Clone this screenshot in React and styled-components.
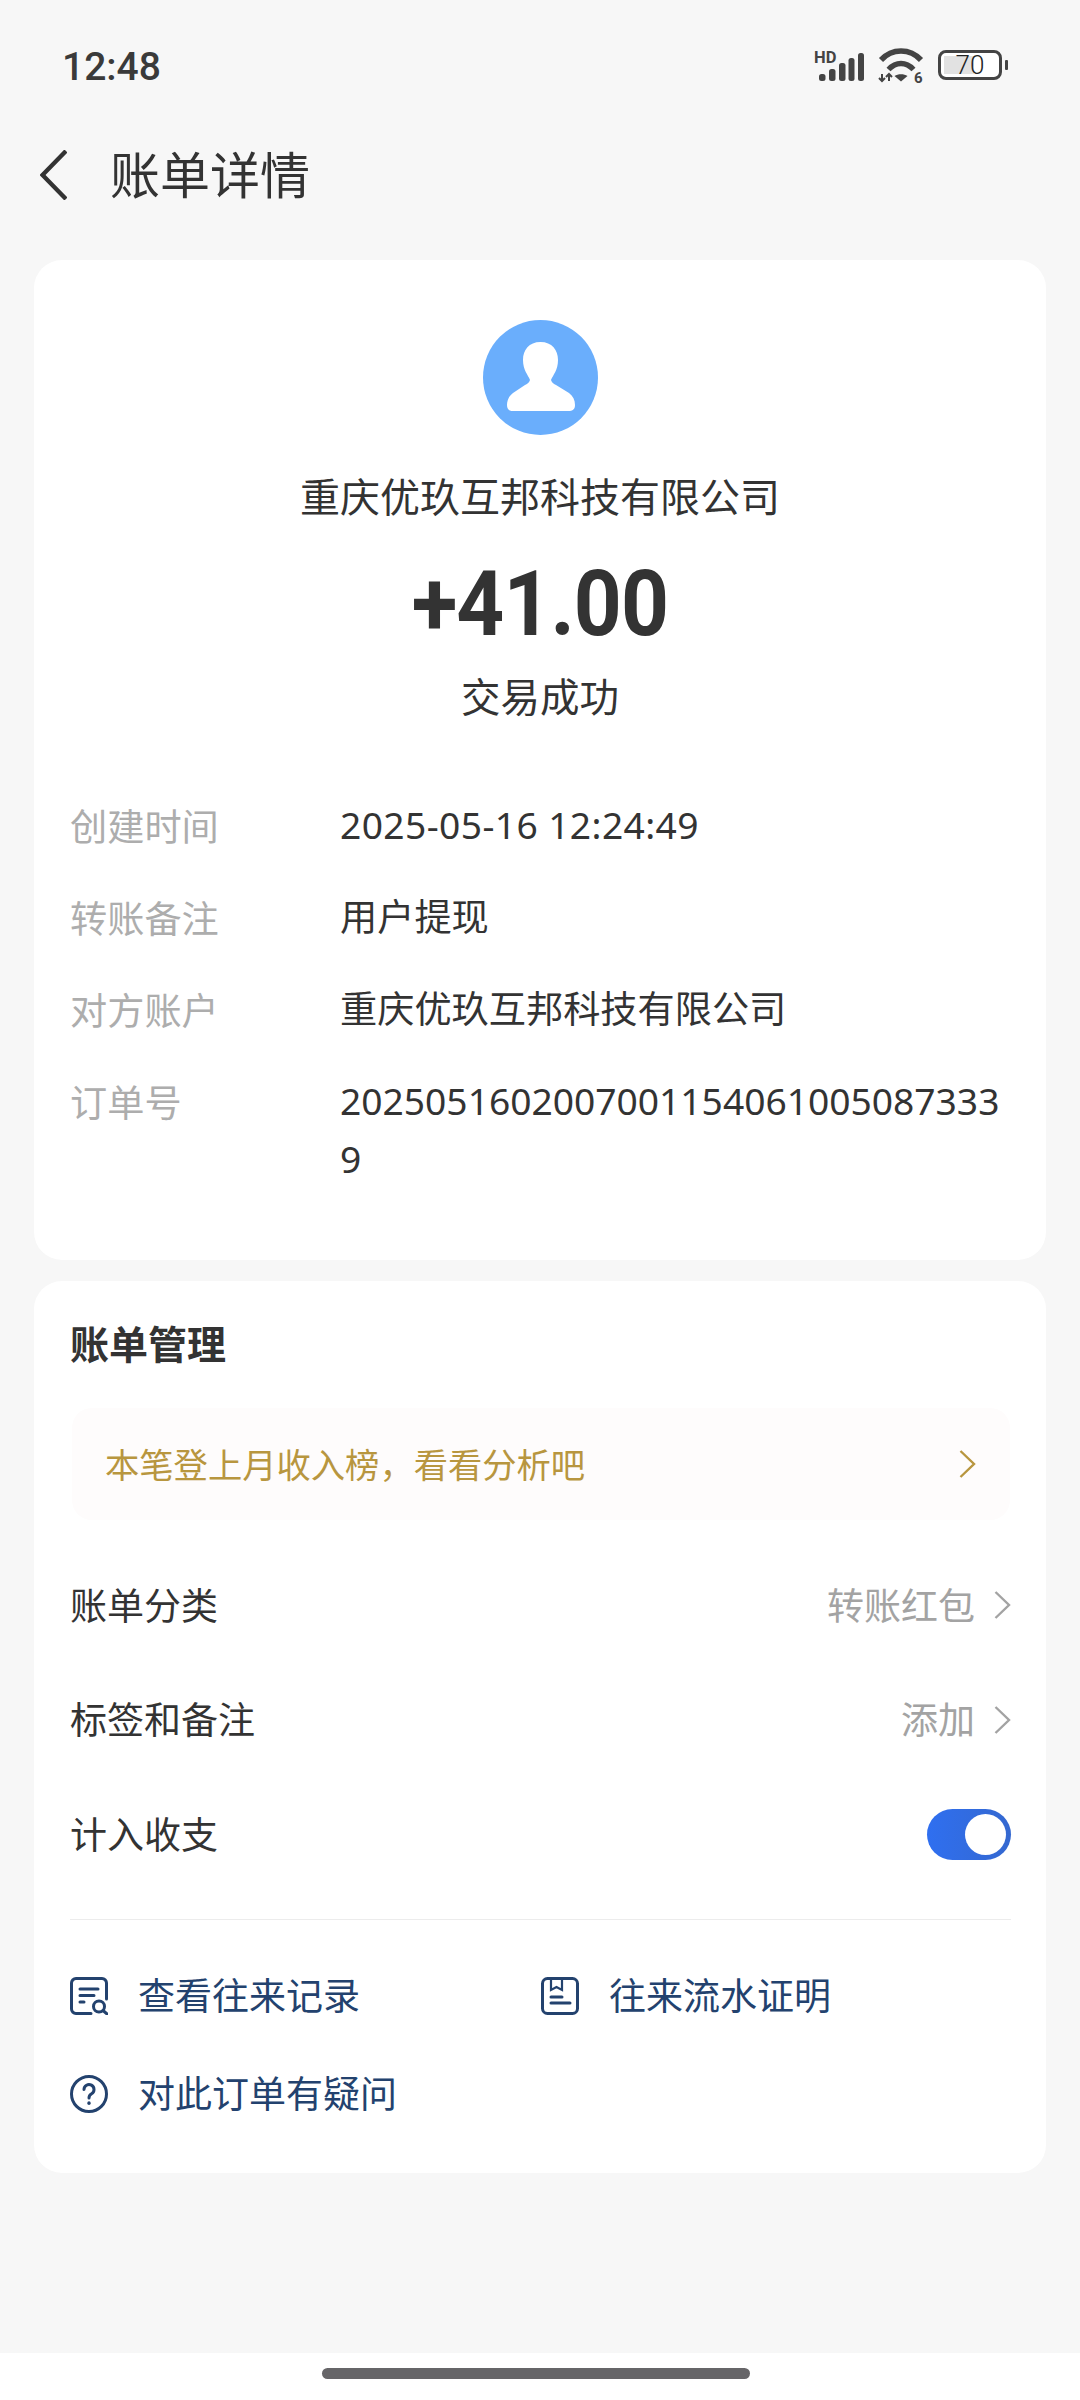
import styled, { createGlobalStyle } from "styled-components";

const GlobalStyle = createGlobalStyle`
  * {
    box-sizing: border-box;
  }
  html,
  body {
    margin: 0;
    padding: 0;
    background: #f7f7f7;
    font-family: "Noto Sans CJK SC", "Noto Sans", sans-serif;
    color: #333;
  }
`;

const details = [
  { label: "创建时间", value: "2025-05-16 12:24:49", wide: true },
  { label: "转账备注", value: "用户提现" },
  { label: "对方账户", value: "重庆优玖互邦科技有限公司" },
  { label: "订单号", value: "20250516020070011540610050873339" },
];

const BackIcon = () => (
  <svg width="27" height="50" viewBox="0 0 27 50" fill="none" stroke="#333" strokeWidth="4.4">
    <path d="M26 1 L2.5 25 L26 49" />
  </svg>
);

const Chevron = ({ color = "#a3a3a3" }) => (
  <svg width="17" height="28" viewBox="0 0 17 28" fill="none" stroke={color} strokeWidth="2.4">
    <path d="M1.5 1 L15 14 L1.5 27" />
  </svg>
);

const SignalIcon = () => (
  <svg width="50" height="45" viewBox="0 -6 50 45" fill="#444">
    <text x="0" y="14" fontFamily="Roboto, sans-serif" fontWeight="700" fontSize="16.5">
      HD
    </text>
    <rect x="5" y="25" width="6.5" height="7" rx="2.5" />
    <rect x="15" y="20" width="6.5" height="12" rx="2.5" />
    <rect x="25" y="14" width="6.5" height="18" rx="2.5" />
    <rect x="34.5" y="9" width="6" height="23" rx="2.5" />
    <rect x="44" y="4" width="6" height="28" rx="2.5" />
  </svg>
);

const WifiIcon = () => (
  <svg width="46" height="45" viewBox="0 -5 46 45" fill="none">
    <path d="M3 12 C14 0 32 0 43 12" stroke="#444" strokeWidth="5.6" />
    <path d="M10.5 21.5 C18 13.5 28 13.5 35.5 21.5" stroke="#444" strokeWidth="5.4" />
    <path d="M16.5 28 C20 25.5 26 25.5 29.5 28 L23 33.5 Z" fill="#444" />
    <path d="M4 26 V33 M1 30 L4 33 L7 30 M11 33 V26 M8 29 L11 26 L14 29" stroke="#444" strokeWidth="2" />
    <text x="36" y="34.5" fill="#444" fontFamily="Roboto, sans-serif" fontWeight="700" fontSize="15">
      6
    </text>
  </svg>
);

const UserIcon = () => (
  <svg width="115" height="115" viewBox="0 0 115 115">
    <circle cx="57.5" cy="57.5" r="57.5" fill="#6aaefc" />
    <path
      fill="#fff"
      d="M57.5 22 C46 22 40 30 40 40 C40 50 45 55 47 60 C46 63 44 64 42 65 L30 73 C26 76 24 80 24 85 C24 89 26 91 30 91 L85 91 C90 91 92 89 92 85 C92 80 90 76 86 73 L73 65 C71 64 69 63 68 60 C70 55 75 50 75 40 C75 30 69 22 57.5 22 Z"
    />
  </svg>
);

const RecordsIcon = () => (
  <svg width="38" height="38" viewBox="0 0 38 38" fill="none" stroke="#23426e" strokeWidth="3" strokeLinecap="round">
    <path d="M21 36.5 H6 A4.5 4.5 0 0 1 1.5 32 V6 A4.5 4.5 0 0 1 6 1.5 H32 A4.5 4.5 0 0 1 36.5 6 V22" />
    <path d="M10 12 H28 M10 18.5 H24 M10 25 H14" />
    <circle cx="29" cy="29.5" r="5.5" />
    <path d="M33 33.5 L37 37" />
  </svg>
);

const StatementIcon = () => (
  <svg width="38" height="38" viewBox="0 0 38 38" fill="none" stroke="#23426e" strokeWidth="3" strokeLinecap="round">
    <rect x="1.5" y="1.5" width="35" height="35" rx="5" />
    <path d="M10 2 V13 L15.5 10 L21 13 V2" strokeWidth="2.2" />
    <path d="M10 20 H21 M10 26 H29" />
  </svg>
);

const QuestionIcon = () => (
  <svg width="38" height="38" viewBox="0 0 38 38" fill="none" stroke="#23426e" strokeWidth="3" strokeLinecap="round">
    <circle cx="19" cy="19" r="17.5" />
    <path d="M14 14.5 A5 5 0 1 1 21.6 18.8 C19.6 20 19 21 19 23" />
    <path d="M19 28 V28.2" strokeWidth="3.4" />
  </svg>
);

export default function App() {
  return (
    <Page>
      <GlobalStyle />
      <StatusBar>
        <Clock>12:48</Clock>
        <StatusIcons>
          <SignalIcon />
          <WifiIcon />
          <Battery>
            <BatteryBody>70</BatteryBody>
            <BatteryNub />
          </Battery>
        </StatusIcons>
      </StatusBar>

      <NavBar>
        <BackIcon />
        <NavTitle>账单详情</NavTitle>
      </NavBar>

      <Content>
        <SummaryCard>
          <UserIcon />
          <CompanyName>重庆优玖互邦科技有限公司</CompanyName>
          <Amount>+41.00</Amount>
          <StatusText>交易成功</StatusText>
          <DetailList>
            {details.map(({ label, value, wide }) => (
              <DetailRow key={label}>
                <DetailLabel>{label}</DetailLabel>
                <DetailValue $wide={wide}>{value}</DetailValue>
              </DetailRow>
            ))}
          </DetailList>
        </SummaryCard>

        <ManageCard>
          <CardTitle>账单管理</CardTitle>
          <Banner>
            <BannerText>本笔登上月收入榜，看看分析吧</BannerText>
            <Chevron color="#b8963f" />
          </Banner>
          <SettingList>
            <SettingRow>
              <SettingLabel>账单分类</SettingLabel>
              <SettingValue>
                <SettingValueText>转账红包</SettingValueText>
                <Chevron />
              </SettingValue>
            </SettingRow>
            <SettingRow>
              <SettingLabel>标签和备注</SettingLabel>
              <SettingValue>
                <SettingValueText>添加</SettingValueText>
                <Chevron />
              </SettingValue>
            </SettingRow>
            <SettingRow>
              <SettingLabel>计入收支</SettingLabel>
              <Toggle>
                <ToggleKnob />
              </Toggle>
            </SettingRow>
          </SettingList>
          <Divider />
          <LinkGrid>
            <LinkItem>
              <RecordsIcon />
              <LinkText>查看往来记录</LinkText>
            </LinkItem>
            <LinkItem>
              <StatementIcon />
              <LinkText>往来流水证明</LinkText>
            </LinkItem>
            <LinkItem>
              <QuestionIcon />
              <LinkText>对此订单有疑问</LinkText>
            </LinkItem>
          </LinkGrid>
        </ManageCard>
      </Content>

      <HomeBar>
        <HomeHandle />
      </HomeBar>
    </Page>
  );
}

//styling

const Page = styled.div`
  display: flex;
  flex-direction: column;
  width: 1080px;
  height: 2400px;
  overflow: hidden;
  background: #f7f7f7;
`;

const StatusBar = styled.div`
  display: flex;
  align-items: center;
  justify-content: space-between;
  height: 130px;
  padding: 0 72px 0 62px;
`;

const Clock = styled.span`
  padding-top: 3px;
  font-family: "Roboto", sans-serif;
  font-weight: 500;
  font-size: 39px;
  color: #3a3a3a;
`;

const StatusIcons = styled.div`
  display: flex;
  align-items: center;
  gap: 14px;
`;

const Battery = styled.div`
  display: flex;
  align-items: center;
  gap: 3px;
`;

const BatteryBody = styled.div`
  width: 64px;
  height: 30px;
  border: 3px solid #444;
  border-radius: 8px;
  text-align: center;
  font-family: "Roboto", sans-serif;
  font-weight: 300;
  font-size: 26px;
  line-height: 24px;
  color: #222;
  background: linear-gradient(#e2e2e2, #e2e2e2) no-repeat 3px 3px / 30px 18px, #fff;
`;

const BatteryNub = styled.div`
  width: 3px;
  height: 10px;
  border-radius: 1px;
  background: #444;
`;

const NavBar = styled.div`
  display: flex;
  align-items: center;
  gap: 43px;
  height: 90px;
  padding-left: 40px;
`;

const NavTitle = styled.h1`
  margin: 0;
  padding-bottom: 6px;
  font-weight: 400;
  font-size: 50px;
  line-height: 60px;
  color: #333;
`;

const Content = styled.main`
  flex: 1;
  display: flex;
  flex-direction: column;
  gap: 21px;
  padding: 40px 34px 0;
`;

const Card = styled.section`
  background: #fff;
  border-radius: 28px;
`;

const SummaryCard = styled(Card)`
  display: flex;
  flex-direction: column;
  align-items: center;
  padding: 60px 36px 72.5px;
`;

const CompanyName = styled.div`
  margin-top: 32px;
  font-size: 40px;
  line-height: 56px;
  color: #333;
`;

const Amount = styled.div`
  margin-top: 32px;
  font-family: "Roboto", sans-serif;
  font-weight: 700;
  font-size: 90px;
  line-height: 100px;
  letter-spacing: -1px;
  color: #333;
  transform: scaleX(0.93);
`;

const StatusText = styled.div`
  margin-top: 12px;
  font-size: 39.5px;
  line-height: 56px;
  color: #333;
`;

const DetailList = styled.div`
  display: flex;
  flex-direction: column;
  gap: 34px;
  width: 100%;
  margin-top: 72.5px;
`;

const DetailRow = styled.div`
  display: grid;
  grid-template-columns: 270px 670px;
  font-size: 37.2px;
  line-height: 58px;
`;

const DetailLabel = styled.div`
  color: #adadad;
`;

const DetailValue = styled.div`
  font-family: "Noto Sans", "Noto Sans CJK SC", sans-serif;
  letter-spacing: ${({ $wide }) => ($wide ? "0.4px" : "0")};
  word-break: break-all;
  color: #333;
`;

const ManageCard = styled(Card)`
  padding: 32.5px 35px 30px 36px;
`;

const CardTitle = styled.h2`
  margin: 0;
  font-weight: 700;
  font-size: 39px;
  line-height: 56px;
  color: #333;
`;

const Banner = styled.div`
  display: flex;
  align-items: center;
  justify-content: space-between;
  height: 112px;
  margin: 38.5px 1px 0 2px;
  padding: 0 34px 0 33px;
  border-radius: 20px;
  background: #fefcfc;
`;

const BannerText = styled.span`
  padding-bottom: 3px;
  font-size: 34.3px;
  color: #b8963f;
`;

const SettingList = styled.div`
  margin-top: 28px;
`;

const SettingRow = styled.div`
  display: flex;
  align-items: center;
  justify-content: space-between;
  height: 114.5px;
  font-size: 37px;
`;

const SettingLabel = styled.span`
  padding-bottom: 3px;
  color: #333;
`;

const SettingValue = styled.span`
  display: flex;
  align-items: center;
  gap: 19px;
  color: #a3a3a3;
`;

const SettingValueText = styled.span`
  padding-bottom: 3px;
`;

const Toggle = styled.div`
  display: flex;
  align-items: center;
  justify-content: flex-end;
  width: 84px;
  height: 51px;
  padding-right: 5px;
  border-radius: 26px;
  background: linear-gradient(to right, #2f6ff0, #3468d0);
`;

const ToggleKnob = styled.div`
  width: 41px;
  height: 41px;
  border-radius: 50%;
  background: #fff;
`;

const Divider = styled.hr`
  margin: 27px 0 0;
  border: none;
  height: 1px;
  background: #ececec;
`;

const LinkGrid = styled.div`
  display: grid;
  grid-template-columns: 471px 1fr;
  grid-auto-rows: 98px;
  margin-top: 27px;
`;

const LinkItem = styled.div`
  display: flex;
  align-items: center;
  gap: 30px;
  font-size: 37px;
  color: #23426e;
`;

const LinkText = styled.span`
  padding-bottom: 3px;
`;

const HomeBar = styled.div`
  display: flex;
  justify-content: center;
  height: 47px;
  padding: 15px 8px 0 0;
  background: #fff;
`;

const HomeHandle = styled.div`
  width: 428px;
  height: 11px;
  border-radius: 6px;
  background: #666568;
`;
